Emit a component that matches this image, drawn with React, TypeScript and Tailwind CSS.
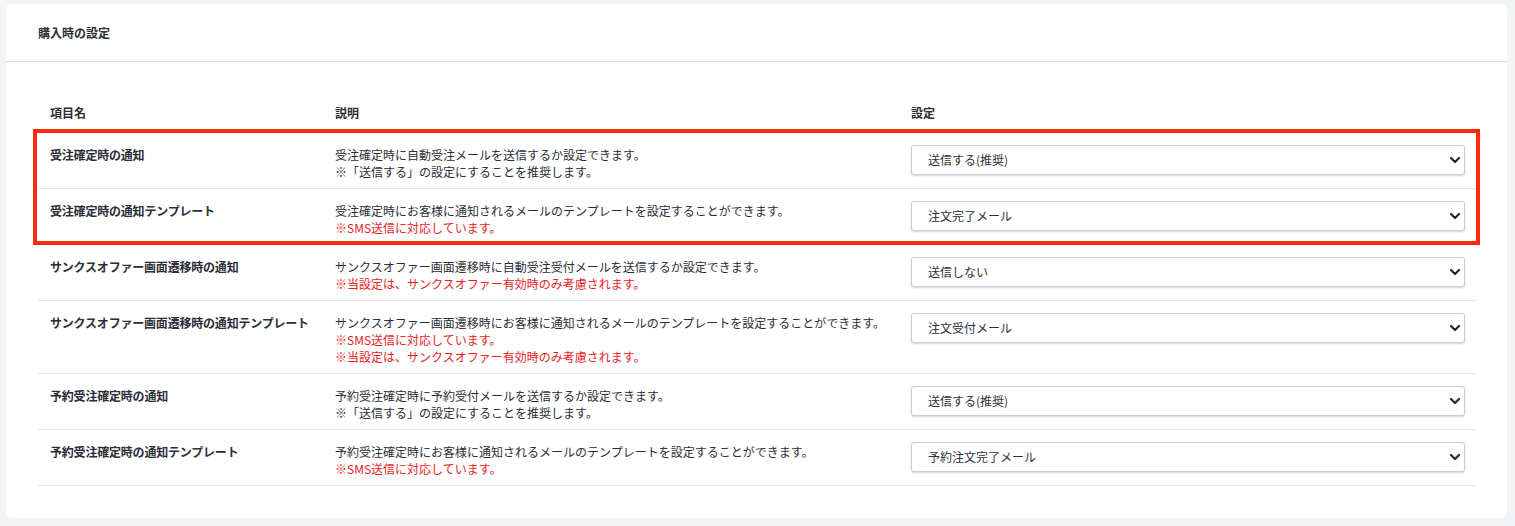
import React from "react";

interface SettingRow {
  id: string;
  label: string;
  lines: string[];
  notes: string[];
  value: string;
  options: string[];
}

const rows: SettingRow[] = [
  {
    id: "order-confirm",
    label: "受注確定時の通知",
    lines: ["受注確定時に自動受注メールを送信するか設定できます。", "※「送信する」の設定にすることを推奨します。"],
    notes: [],
    value: "送信する(推奨)",
    options: ["送信する(推奨)", "送信しない"],
  },
  {
    id: "order-confirm-template",
    label: "受注確定時の通知テンプレート",
    lines: ["受注確定時にお客様に通知されるメールのテンプレートを設定することができます。"],
    notes: ["※SMS送信に対応しています。"],
    value: "注文完了メール",
    options: ["注文完了メール", "注文受付メール"],
  },
  {
    id: "thanks-offer",
    label: "サンクスオファー画面遷移時の通知",
    lines: ["サンクスオファー画面遷移時に自動受注受付メールを送信するか設定できます。"],
    notes: ["※当設定は、サンクスオファー有効時のみ考慮されます。"],
    value: "送信しない",
    options: ["送信する(推奨)", "送信しない"],
  },
  {
    id: "thanks-offer-template",
    label: "サンクスオファー画面遷移時の通知テンプレート",
    lines: ["サンクスオファー画面遷移時にお客様に通知されるメールのテンプレートを設定することができます。"],
    notes: ["※SMS送信に対応しています。", "※当設定は、サンクスオファー有効時のみ考慮されます。"],
    value: "注文受付メール",
    options: ["注文完了メール", "注文受付メール"],
  },
  {
    id: "preorder-confirm",
    label: "予約受注確定時の通知",
    lines: ["予約受注確定時に予約受付メールを送信するか設定できます。", "※「送信する」の設定にすることを推奨します。"],
    notes: [],
    value: "送信する(推奨)",
    options: ["送信する(推奨)", "送信しない"],
  },
  {
    id: "preorder-confirm-template",
    label: "予約受注確定時の通知テンプレート",
    lines: ["予約受注確定時にお客様に通知されるメールのテンプレートを設定することができます。"],
    notes: ["※SMS送信に対応しています。"],
    value: "予約注文完了メール",
    options: ["予約注文完了メール", "注文完了メール"],
  },
];

function Row({ row }: { row: SettingRow }) {
  return (
    <div className="grid grid-cols-[285px_576px_1fr] border-b border-[#e3e5ec]">
      <div className="whitespace-nowrap pl-3 pt-[13px] pb-[8px] font-bold leading-[17px] tracking-[-0.2px]">
        {row.label}
      </div>
      <div className="px-3 pt-[13px] pb-[8px] leading-[17px]">
        {row.lines.map((l) => (
          <div key={l}>{l}</div>
        ))}
        {row.notes.map((n) => (
          <div key={n} className="text-[#e8231e]">
            {n}
          </div>
        ))}
      </div>
      <div className="pl-3 pr-[10px] pt-3">
        <div className="relative">
          <select
            defaultValue={row.value}
            className="h-[30px] w-full appearance-none rounded-[3px] border border-[#c9cdd9] bg-white pl-4 pr-8 text-xs text-[#2d3038] shadow-[0_1px_2px_rgba(30,35,60,0.18)] outline-none"
          >
            {row.options.map((o) => (
              <option key={o} value={o}>
                {o}
              </option>
            ))}
          </select>
          <svg
            className="pointer-events-none absolute right-[4px] top-1/2 -translate-y-1/2"
            width="12"
            height="8"
            viewBox="0 0 12 8"
            fill="none"
          >
            <path d="M2 2l4 4 4-4" stroke="#2d3038" strokeWidth="2.4" strokeLinecap="round" strokeLinejoin="round" />
          </svg>
        </div>
      </div>
    </div>
  );
}

export default function App() {
  return (
    <div
      className="min-h-[526px] bg-[#f3f4f6] pl-[6px] pr-2 pt-1 pb-2 text-xs text-[#2b2e36]"
      style={{ fontFamily: '"Noto Sans CJK JP", "Noto Sans", sans-serif' }}
    >
      <div className="rounded-md bg-white">
        <div className="border-b border-[#dcdde1] px-8 pt-[21px] pb-[20px] font-bold leading-4">
          購入時の設定
        </div>
        <div className="px-8 pt-[31px] pb-8">
          {/* Table header */}
          <div className="grid h-10 grid-cols-[285px_576px_1fr] items-center border-b border-[#e3e5ec] font-bold">
            <div className="px-3">項目名</div>
            <div className="px-3">説明</div>
            <div className="px-3">設定</div>
          </div>

          {/* Highlighted rows */}
          <div className="relative">
            <Row row={rows[0]} />
            <Row row={rows[1]} />
            <div className="pointer-events-none absolute -left-[5px] -right-[5px] -top-[4px] bottom-0 border-4 border-[#ff2a0c]" />
          </div>

          {rows.slice(2).map((r) => (
            <Row key={r.id} row={r} />
          ))}
        </div>
      </div>
    </div>
  );
}
